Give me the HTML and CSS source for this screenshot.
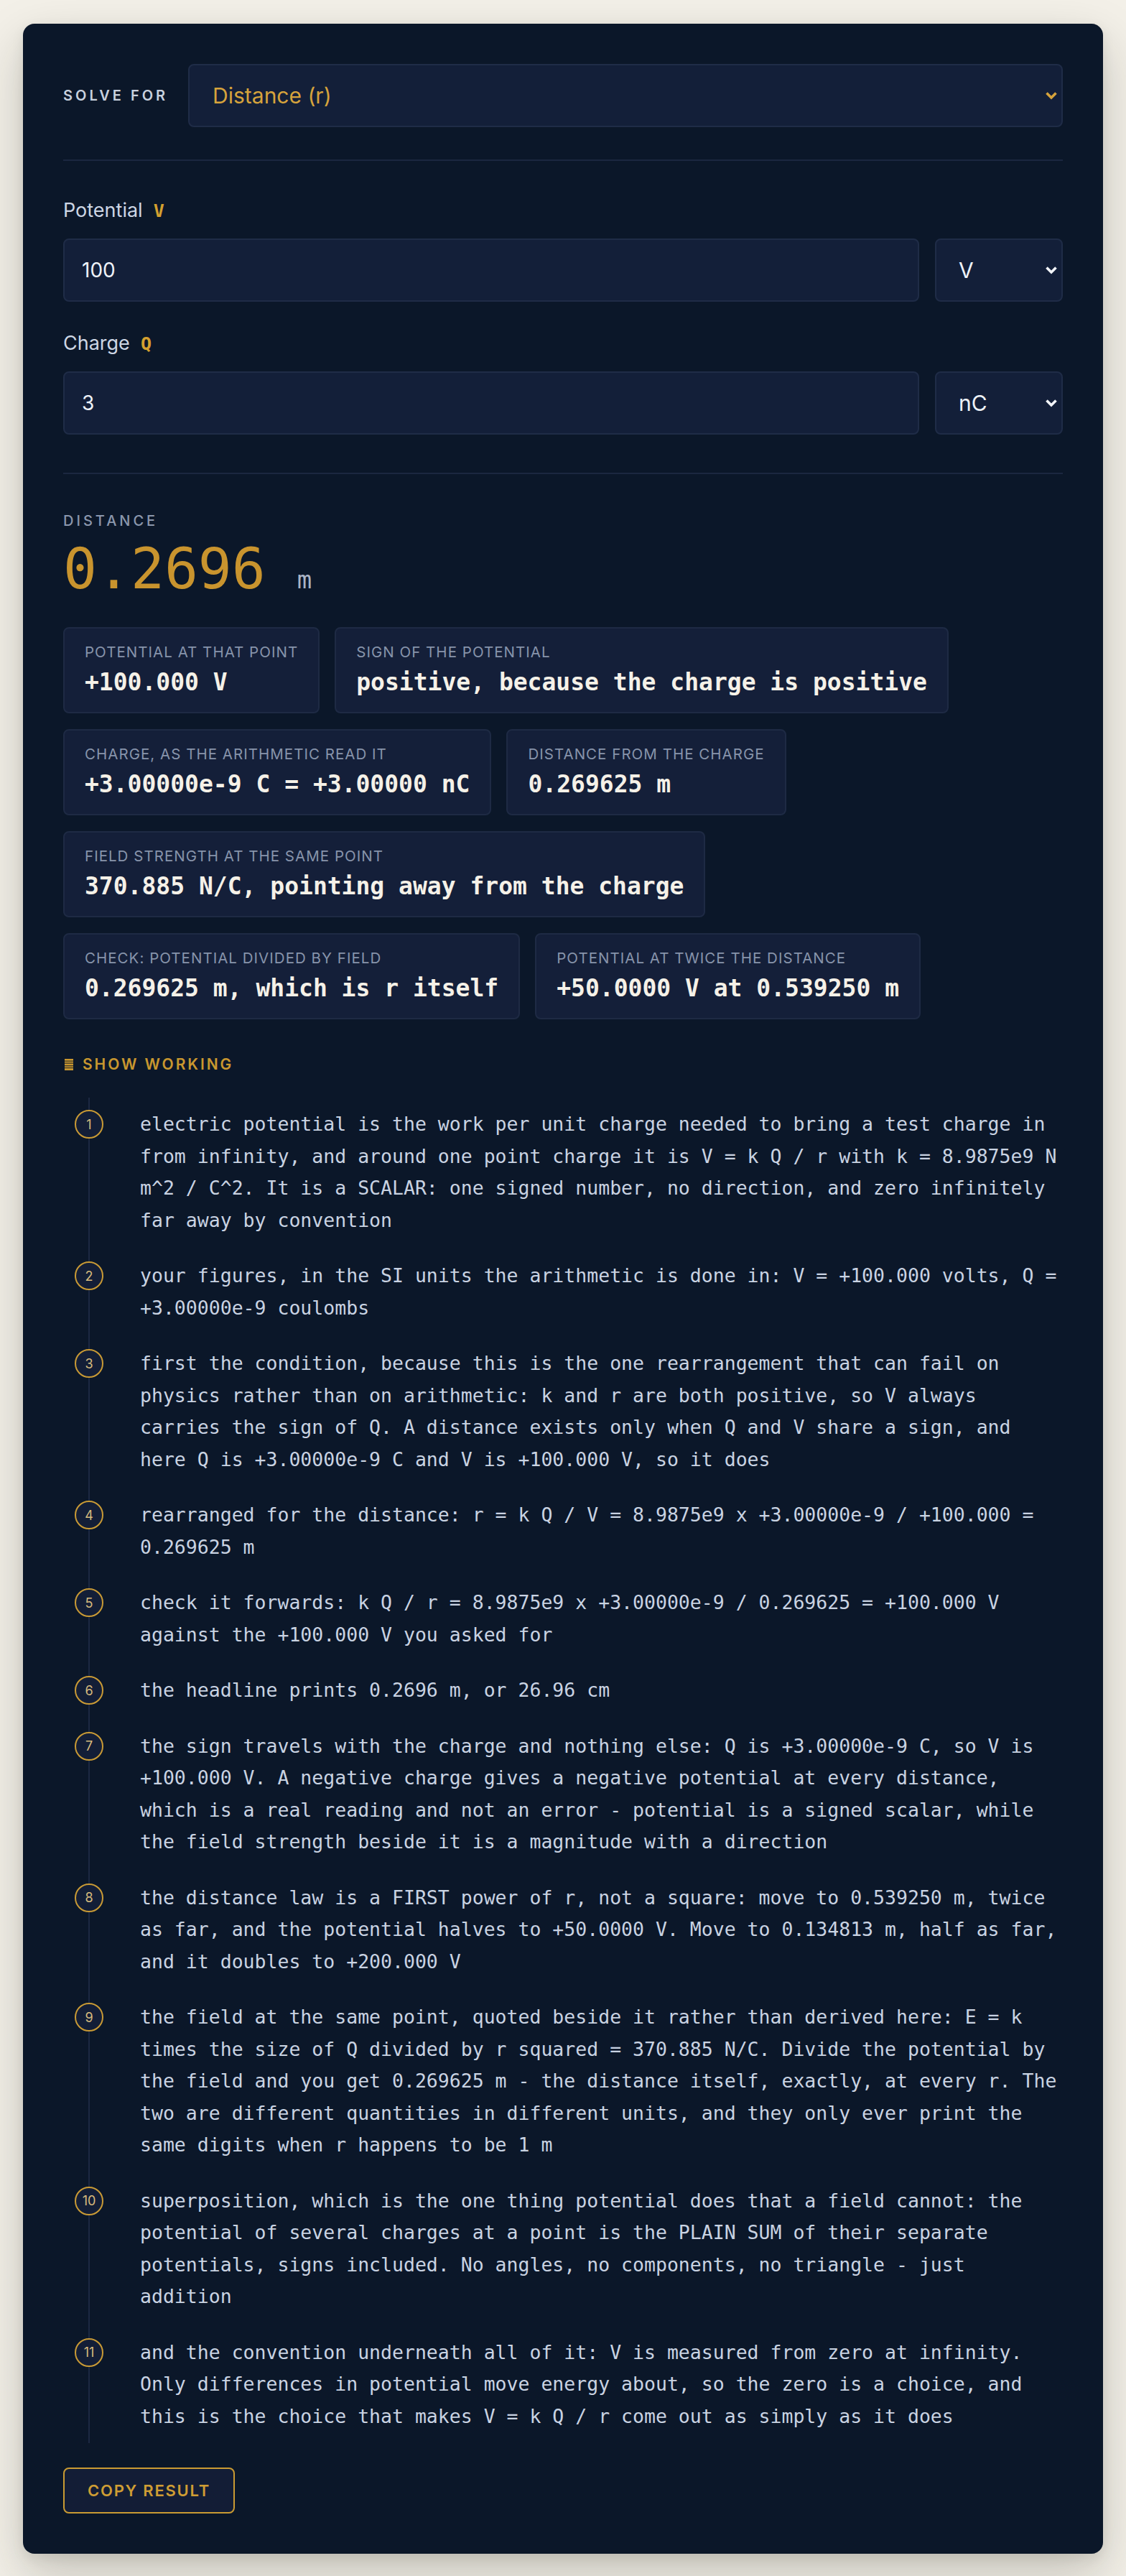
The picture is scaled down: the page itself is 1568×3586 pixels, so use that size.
FILE: index.html
```html
<!DOCTYPE html>
<html lang="en">
<head>
<meta charset="utf-8">
<title>Electric potential: solve for distance</title>
<link rel="stylesheet" href="styles.css">
</head>
<body>
<main class="calc">

  <div class="solve-row">
    <label class="eyebrow" for="solve-for">Solve for</label>
    <div class="select-wrap">
      <select id="solve-for" class="select select-main">
        <option>Distance (r)</option>
        <option>Potential (V)</option>
        <option>Charge (Q)</option>
      </select>
      <svg class="chevron chevron-gold" viewBox="0 0 18 12" aria-hidden="true"><polyline points="2.5,2.5 9,9 15.5,2.5"/></svg>
    </div>
  </div>

  <div class="rule rule-top"></div>

  <div class="fields">
    <div class="field">
      <label class="field-label" for="pot">Potential <span class="sym">V</span></label>
      <div class="field-row">
        <input id="pot" class="input" type="text" value="100">
        <div class="select-wrap">
          <select class="select select-unit"><option>V</option><option>kV</option><option>mV</option></select>
          <svg class="chevron chevron-light" viewBox="0 0 18 12" aria-hidden="true"><polyline points="2.5,2.5 9,9 15.5,2.5"/></svg>
        </div>
      </div>
    </div>
    <div class="field">
      <label class="field-label" for="chg">Charge <span class="sym">Q</span></label>
      <div class="field-row">
        <input id="chg" class="input" type="text" value="3">
        <div class="select-wrap">
          <select class="select select-unit"><option>nC</option><option>C</option><option>&micro;C</option></select>
          <svg class="chevron chevron-light" viewBox="0 0 18 12" aria-hidden="true"><polyline points="2.5,2.5 9,9 15.5,2.5"/></svg>
        </div>
      </div>
    </div>
  </div>

  <div class="rule rule-result"></div>

  <section class="result">
    <div class="result-label">Distance</div>
    <div class="headline">
      <span class="headline-value">0.2696</span>
      <span class="headline-unit">m</span>
    </div>

    <div class="tiles">
      <div class="tile">
        <div class="tile-label">Potential at that point</div>
        <div class="tile-value">+100.000 V</div>
      </div>
      <div class="tile">
        <div class="tile-label">Sign of the potential</div>
        <div class="tile-value">positive, because the charge is positive</div>
      </div>
      <div class="tile">
        <div class="tile-label">Charge, as the arithmetic read it</div>
        <div class="tile-value">+3.00000e-9 C = +3.00000 nC</div>
      </div>
      <div class="tile">
        <div class="tile-label">Distance from the charge</div>
        <div class="tile-value">0.269625 m</div>
      </div>
      <div class="tile">
        <div class="tile-label">Field strength at the same point</div>
        <div class="tile-value">370.885 N/C, pointing away from the charge</div>
      </div>
      <div class="tile">
        <div class="tile-label">Check: potential divided by field</div>
        <div class="tile-value">0.269625 m, which is r itself</div>
      </div>
      <div class="tile">
        <div class="tile-label">Potential at twice the distance</div>
        <div class="tile-value">+50.0000 V at 0.539250 m</div>
      </div>
    </div>
  </section>

  <details class="working" open>
    <summary>
      <svg class="working-icon" viewBox="0 0 12 16" aria-hidden="true">
        <rect x="0" y="0" width="12" height="2.6"/>
        <rect x="0" y="3.3" width="12" height="2.6" opacity="0.8"/>
        <rect x="0" y="6.6" width="12" height="2.6"/>
        <rect x="0" y="9.9" width="12" height="2.6" opacity="0.8"/>
        <rect x="0" y="13.2" width="12" height="2.8"/>
      </svg>
      Show working
    </summary>
    <ol class="steps">
      <li class="step"><span class="step-num">1</span><p class="step-text">electric potential is the work per unit charge needed to bring a test charge in from infinity, and around one point charge it is V = k Q / r with k = 8.9875e9 N m^2 / C^2. It is a SCALAR: one signed number, no direction, and zero infinitely far away by convention</p></li>
      <li class="step"><span class="step-num">2</span><p class="step-text">your figures, in the SI units the arithmetic is done in: V = +100.000 volts, Q = +3.00000e-9 coulombs</p></li>
      <li class="step"><span class="step-num">3</span><p class="step-text">first the condition, because this is the one rearrangement that can fail on physics rather than on arithmetic: k and r are both positive, so V always carries the sign of Q. A distance exists only when Q and V share a sign, and here Q is +3.00000e-9 C and V is +100.000 V, so it does</p></li>
      <li class="step"><span class="step-num">4</span><p class="step-text">rearranged for the distance: r = k Q / V = 8.9875e9 x +3.00000e-9 / +100.000 = 0.269625 m</p></li>
      <li class="step"><span class="step-num">5</span><p class="step-text">check it forwards: k Q / r = 8.9875e9 x +3.00000e-9 / 0.269625 = +100.000 V against the +100.000 V you asked for</p></li>
      <li class="step"><span class="step-num">6</span><p class="step-text">the headline prints 0.2696 m, or 26.96 cm</p></li>
      <li class="step"><span class="step-num">7</span><p class="step-text">the sign travels with the charge and nothing else: Q is +3.00000e-9 C, so V is +100.000 V. A negative charge gives a negative potential at every distance, which is a real reading and not an error - potential is a signed scalar, while the field strength beside it is a magnitude with a direction</p></li>
      <li class="step"><span class="step-num">8</span><p class="step-text">the distance law is a FIRST power of r, not a square: move to 0.539250 m, twice as far, and the potential halves to +50.0000 V. Move to 0.134813 m, half as far, and it doubles to +200.000 V</p></li>
      <li class="step"><span class="step-num">9</span><p class="step-text">the field at the same point, quoted beside it rather than derived here: E = k times the size of Q divided by r squared = 370.885 N/C. Divide the potential by the field and you get 0.269625 m - the distance itself, exactly, at every r. The two are different quantities in different units, and they only ever print the same digits when r happens to be 1 m</p></li>
      <li class="step"><span class="step-num">10</span><p class="step-text">superposition, which is the one thing potential does that a field cannot: the potential of several charges at a point is the PLAIN SUM of their separate potentials, signs included. No angles, no components, no triangle - just addition</p></li>
      <li class="step"><span class="step-num">11</span><p class="step-text">and the convention underneath all of it: V is measured from zero at infinity. Only differences in potential move energy about, so the zero is a choice, and this is the choice that makes V = k Q / r come out as simply as it does</p></li>
    </ol>
  </details>

  <div class="actions">
    <button class="copy" type="button">Copy result</button>
  </div>

</main>
</body>
</html>
```

FILE: styles.css
```css
* {
  box-sizing: border-box;
}

html,
body {
  margin: 0;
}

body {
  background: #f3f0e8;
  padding: 33px 32px;
  font-family: "Inter", "Noto Sans", sans-serif;
}

/* main calculator card */
.calc {
  background: #0b1729;
  border-radius: 16px;
  padding: 56px;
  box-shadow: 0 28px 70px rgba(28, 26, 18, 0.22), 0 6px 18px rgba(28, 26, 18, 0.08);
}

/* ---------- solve-for row ---------- */
.solve-row {
  display: grid;
  grid-template-columns: auto 1fr;
  column-gap: 28px;
  align-items: center;
}

.eyebrow {
  font-size: 20px;
  font-weight: 600;
  letter-spacing: 0.2em;
  line-height: 28px;
  text-transform: uppercase;
  color: #c8d1de;
}

.select-wrap {
  position: relative;
}

.select {
  -webkit-appearance: none;
  appearance: none;
  display: block;
  width: 100%;
  height: 88px;
  margin: 0;
  padding: 0 48px 0 32px;
  background: #131f39;
  border: 2px solid #1f2c47;
  border-radius: 8px;
  font-family: "Inter", "Noto Sans", sans-serif;
  font-size: 30px;
  outline: none;
}

.select-main {
  color: #d6a33c;
}

.select-unit {
  color: #eef2f8;
  padding-left: 31px;
}

/* dropdown arrow drawn over the right end of each select */
.chevron {
  position: absolute;
  right: 7px;
  top: 50%;
  width: 18px;
  height: 12px;
  margin-top: -6px;
  fill: none;
  stroke-width: 3.6;
  stroke-linecap: butt;
  stroke-linejoin: miter;
  pointer-events: none;
}

.chevron-gold {
  stroke: #d6a33c;
}

.chevron-light {
  stroke: #f2f4f8;
}

/* ---------- dividers ---------- */
.rule {
  height: 2px;
  background: #1b2740;
}

.rule-top {
  margin: 45px 0 51px;
}

.rule-result {
  margin: 53px 0 51px;
}

/* ---------- inputs ---------- */
.field + .field {
  margin-top: 40px;
}

.field-label {
  display: flex;
  align-items: baseline;
  gap: 15px;
  margin-bottom: 20px;
  font-size: 27px;
  line-height: 36px;
  color: #cdd6e4;
}

.sym {
  font-family: "DejaVu Sans Mono", "Liberation Mono", monospace;
  font-weight: 700;
  font-size: 25px;
  color: #d4a02f;
}

.field-row {
  display: grid;
  grid-template-columns: 1fr 178px;
  column-gap: 22px;
}

.input {
  display: block;
  width: 100%;
  height: 88px;
  margin: 0;
  padding: 0 24px;
  background: #131f39;
  border: 2px solid #1f2c47;
  border-radius: 8px;
  font-family: "Inter", "Noto Sans", sans-serif;
  font-size: 28px;
  color: #eef2f8;
  outline: none;
}

/* ---------- result ---------- */
.result-label {
  font-size: 20px;
  font-weight: 500;
  letter-spacing: 0.2em;
  line-height: 28px;
  text-transform: uppercase;
  color: #8b97ad;
}

.headline {
  display: flex;
  align-items: baseline;
  gap: 44px;
  margin-top: 10px;
}

.headline-value {
  font-family: "DejaVu Sans Mono", "Liberation Mono", monospace;
  font-size: 78px;
  line-height: 86px;
  color: #c9942e;
}

.headline-unit {
  font-family: "DejaVu Sans Mono", "Liberation Mono", monospace;
  font-size: 34px;
  line-height: 1;
  color: #aab4c5;
}

.tiles {
  display: flex;
  flex-wrap: wrap;
  gap: 22px 21px;
  margin-top: 38px;
}

.tile {
  background: #141f39;
  border: 2px solid #1e2a44;
  border-radius: 8px;
  padding: 20px 28px 21px;
}

.tile-label {
  font-size: 20.5px;
  line-height: 26px;
  letter-spacing: 0.05em;
  text-transform: uppercase;
  color: #8794ab;
  white-space: nowrap;
}

.tile-value {
  margin-top: 9px;
  font-family: "DejaVu Sans Mono", "Liberation Mono", monospace;
  font-weight: 700;
  font-size: 33px;
  line-height: 40px;
  color: #f5f1e8;
  white-space: nowrap;
}

/* ---------- working ---------- */
.working {
  margin-top: 49px;
}

.working summary {
  list-style: none;
  display: flex;
  align-items: center;
  gap: 13px;
  font-size: 21px;
  font-weight: 600;
  letter-spacing: 0.14em;
  line-height: 28px;
  text-transform: uppercase;
  color: #c9972f;
  cursor: pointer;
}

.working summary::-webkit-details-marker {
  display: none;
}

.working-icon {
  width: 12px;
  height: 16px;
  margin-left: 2px;
  fill: #c9972f;
}

.steps {
  position: relative;
  list-style: none;
  margin: 32px 0 0;
  padding: 15px 0 15px 16px;
}

/* the timeline running behind the numbered circles */
.steps::before {
  content: "";
  position: absolute;
  left: 35px;
  top: 0;
  bottom: 0;
  width: 2px;
  background: #1c2842;
}

.step {
  display: flex;
  align-items: flex-start;
  gap: 51px;
}

.step + .step {
  margin-top: 33px;
}

.step-num {
  position: relative;
  z-index: 1;
  flex: none;
  display: flex;
  align-items: center;
  justify-content: center;
  width: 40px;
  height: 40px;
  margin-top: 2px;
  border: 2px solid #c99a35;
  border-radius: 50%;
  background: #131e37;
  font-size: 18px;
  color: #d8bb7e;
}

.step-text {
  margin: 0;
  max-width: 80.5ch;
  font-family: "DejaVu Sans Mono", "Liberation Mono", monospace;
  font-size: 26.5px;
  line-height: 44.5px;
  color: #c9d3e2;
}

/* ---------- actions ---------- */
.actions {
  display: flex;
  margin-top: 34px;
}

.copy {
  height: 64px;
  margin: 0;
  padding: 0 32px;
  background: #131d36;
  border: 2px solid #c99a32;
  border-radius: 8px;
  font-family: "Inter", "Noto Sans", sans-serif;
  font-size: 22px;
  font-weight: 600;
  letter-spacing: 0.08em;
  text-transform: uppercase;
  color: #cf9d34;
  cursor: pointer;
}
```
